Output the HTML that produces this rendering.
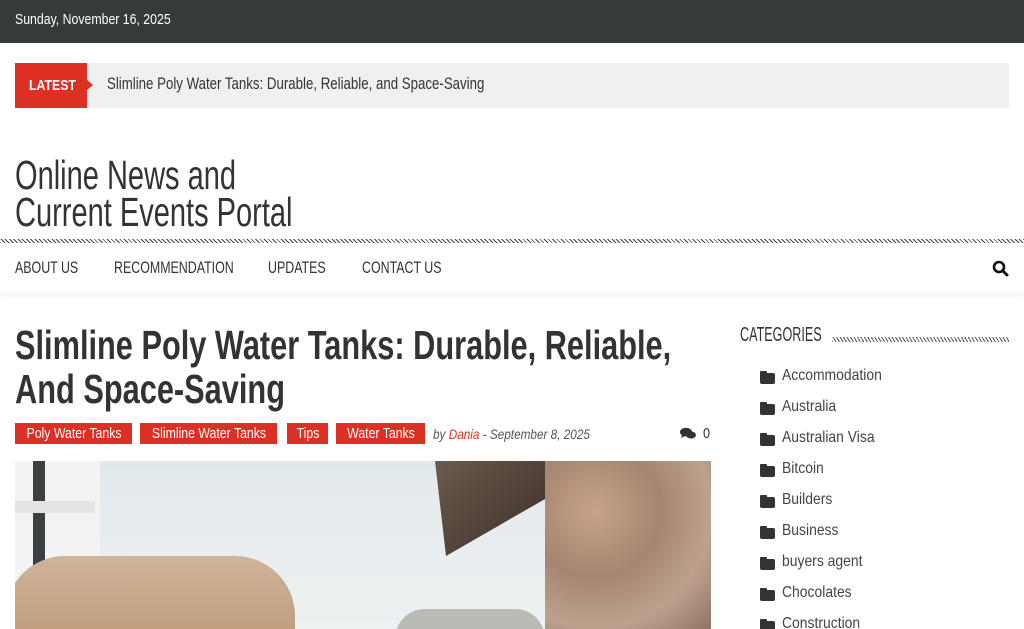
<!DOCTYPE html>
<html><head><meta charset="utf-8"><style>
*{margin:0;padding:0;box-sizing:border-box}
body{width:1024px;height:629px;overflow:hidden;background:#fff;font-family:"Liberation Sans",sans-serif;color:#333;position:relative}
.a{position:absolute;white-space:nowrap}
.s{transform-origin:left top}
.tag{position:absolute;top:423px;height:21px;background:#dd3025;overflow:hidden}
.tag span{position:absolute;left:50%;top:2px;color:#fff;font-size:15px;white-space:nowrap;transform:translateX(-50%) scaleX(0.82)}
.cat{position:relative;height:31px}
.cat i{position:absolute;left:0;top:7px;width:15px;height:11px;background:#333;border-radius:2px}
.cat i:before{content:"";position:absolute;left:0;top:-2px;width:7px;height:3px;background:#333;border-radius:1px 1px 0 0}
.cat b{position:absolute;left:22px;top:1px;font-weight:normal;font-size:16px;color:#444;white-space:nowrap;transform:scaleX(0.87);transform-origin:left top}
</style></head><body>
<div class="a" style="left:0;top:0;width:1024px;height:43px;background:#353b3a"></div>
<div class="a s" style="left:15px;top:11px;color:#fff;font-size:15px;transform:scaleX(0.82)">Sunday, November 16, 2025</div>
<div class="a" style="left:15px;top:63px;width:994px;height:45px;background:#f0f0f0"></div>
<div class="a" style="left:15px;top:63px;width:72px;height:45px;background:#dd3025"></div>
<div class="a" style="left:86px;top:79px;width:0;height:0;border-left:7px solid #dd3025;border-top:6px solid transparent;border-bottom:6px solid transparent"></div>
<div class="a s" style="left:29px;top:77px;color:#fff;font-size:15px;font-weight:bold;transform:scaleX(0.82)">LATEST</div>
<div class="a s" style="left:107px;top:74px;font-size:17px;color:#333;transform:scaleX(0.78)">Slimline Poly Water Tanks: Durable, Reliable, and Space-Saving</div>
<div class="a s" style="left:15px;top:157px;font-size:41px;line-height:37px;color:#333;transform:scaleX(0.708)">Online News and<br>Current Events Portal</div>
<div class="a" style="left:0;top:239px;width:1024px;height:4px;background:repeating-linear-gradient(45deg,#444 0 1px,transparent 1px 3px)"></div>
<div class="a" style="left:0;top:243px;width:1024px;height:50px;box-shadow:0 3px 4px rgba(0,0,0,.05)"></div>
<div class="a s" style="left:15px;top:258px;font-size:17px;transform:scaleX(0.73)">ABOUT US</div>
<div class="a s" style="left:114px;top:258px;font-size:17px;transform:scaleX(0.73)">RECOMMENDATION</div>
<div class="a s" style="left:268px;top:258px;font-size:17px;transform:scaleX(0.73)">UPDATES</div>
<div class="a s" style="left:362px;top:258px;font-size:17px;transform:scaleX(0.73)">CONTACT US</div>
<svg class="a" style="left:992px;top:260px" width="17" height="17" viewBox="0 0 17 17"><circle cx="7" cy="7" r="5" fill="none" stroke="#111" stroke-width="2.6"/><path d="M10.5 10.5L15 15" stroke="#111" stroke-width="3" stroke-linecap="round"/></svg>
<div class="a s" style="left:15px;top:323px;font-size:41px;line-height:44px;font-weight:bold;color:#333;transform:scaleX(0.75)">Slimline Poly Water Tanks: Durable, Reliable,<br>And Space-Saving</div>
<div class="tag" style="left:15px;width:117px"><span>Poly Water Tanks</span></div>
<div class="tag" style="left:140px;width:137px"><span>Slimline Water Tanks</span></div>
<div class="tag" style="left:287px;width:41px"><span>Tips</span></div>
<div class="tag" style="left:336px;width:89px"><span>Water Tanks</span></div>
<div class="a s" style="left:433px;top:426px;font-size:14px;font-style:italic;color:#555;transform:scaleX(0.84)">by <span style="color:#dd3025">Dania</span> - September 8, 2025</div>
<svg class="a" style="left:680px;top:427px" width="16" height="13" viewBox="0 0 16 13"><ellipse cx="6" cy="5" rx="6" ry="4.3" fill="#333"/><path d="M2 8l-1 3 4-2z" fill="#333"/><ellipse cx="11" cy="8" rx="5" ry="3.5" fill="#333"/></svg>
<div class="a s" style="left:703px;top:425px;font-size:15px;transform:scaleX(0.85)">0</div>
<div class="a" style="left:15px;top:461px;width:696px;height:168px;background:linear-gradient(180deg,#e2e9ec,#eef1f2);overflow:hidden">
 <div class="a" style="left:0;top:0;width:85px;height:168px;background:#f3f3f3"></div>
 <div class="a" style="left:18px;top:0;width:12px;height:110px;background:#3a3f41"></div>
 <div class="a" style="left:0;top:40px;width:80px;height:12px;background:#e4e4e4"></div>
 <div class="a" style="left:-10px;top:95px;width:290px;height:120px;border-radius:60px 60px 0 0;background:linear-gradient(180deg,#cfb49a,#b8916d)"></div>
 <div class="a" style="left:420px;top:0;width:110px;height:95px;background:linear-gradient(135deg,#6b5b4e,#3b2f28);clip-path:polygon(0 0,100% 0,100% 40%,10% 100%)"></div>
 <div class="a" style="left:530px;top:0;width:166px;height:168px;background:radial-gradient(circle at 30% 30%,#c7a389,#a58571 40%,#bca28e 70%,#8f7464)"></div>
 <div class="a" style="left:380px;top:148px;width:150px;height:30px;background:#b9bbb5;border-radius:40px 40px 0 0"></div>
</div>
<div class="a s" style="left:740px;top:324px;font-size:20px;color:#333;transform:scaleX(0.63)">CATEGORIES</div>
<div class="a" style="left:832px;top:337px;width:177px;height:5px;background:repeating-linear-gradient(60deg,#555 0 1px,transparent 1px 3px)"></div>
<div style="position:absolute;left:760px;top:366px;width:240px;height:263px;overflow:hidden">
<div class="cat"><i></i><b>Accommodation</b></div>
<div class="cat"><i></i><b>Australia</b></div>
<div class="cat"><i></i><b>Australian Visa</b></div>
<div class="cat"><i></i><b>Bitcoin</b></div>
<div class="cat"><i></i><b>Builders</b></div>
<div class="cat"><i></i><b>Business</b></div>
<div class="cat"><i></i><b>buyers agent</b></div>
<div class="cat"><i></i><b>Chocolates</b></div>
<div class="cat"><i></i><b>Construction</b></div>
</div>
</body></html>
